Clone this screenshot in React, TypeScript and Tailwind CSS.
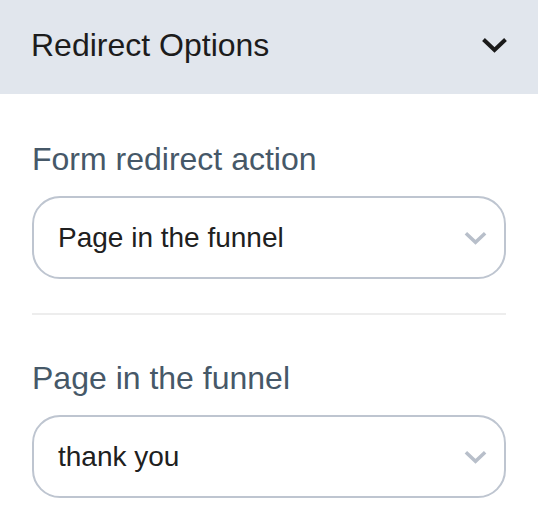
import type { ReactNode } from 'react'

function Chevron({ className, stroke }: { className: string; stroke: string }) {
  return (
    <svg viewBox="0 0 27 16" className={className} fill="none">
      <polyline points="2.5,2.5 13.5,13 24.5,2.5" stroke={stroke} strokeWidth="4" />
    </svg>
  )
}

function Field({ label, value }: { label: string; value: string }) {
  return (
    <div className="flex flex-col">
      <label className="text-[32px] leading-[38px] text-[#465868]">{label}</label>
      <div className="mt-[18px] h-[83px] rounded-[28px] border-2 border-[#bec5d0] bg-white flex items-center justify-between pl-6 pr-[16px]">
        <span className="text-[28px] text-[#202020]">{value}</span>
        <Chevron className="w-[25px] h-[14px]" stroke="#b8bfca" />
      </div>
    </div>
  )
}

function Section({ children }: { children: ReactNode }) {
  return <div className="px-8">{children}</div>
}

export default function App() {
  return (
    <div className="w-[538px] h-[526px] bg-white overflow-hidden" style={{ fontFamily: '"Liberation Sans", Arial, sans-serif' }}>
      <div className="h-[94px] bg-[#e1e6ed] flex items-center justify-between pl-[31px] pr-[30px]">
        <span className="text-[32px] text-[#1c1c1c] -mt-1">Redirect Options</span>
        <Chevron className="w-[27px] h-[16px] -mt-1" stroke="#1a1a1a" />
      </div>
      <div className="pt-[46px]">
        <Section>
          <Field label="Form redirect action" value="Page in the funnel" />
          <div className="mt-[34px] h-[2px] bg-[#ededed]" />
          <div className="mt-[44px]">
            <Field label="Page in the funnel" value="thank you" />
          </div>
        </Section>
      </div>
    </div>
  )
}
